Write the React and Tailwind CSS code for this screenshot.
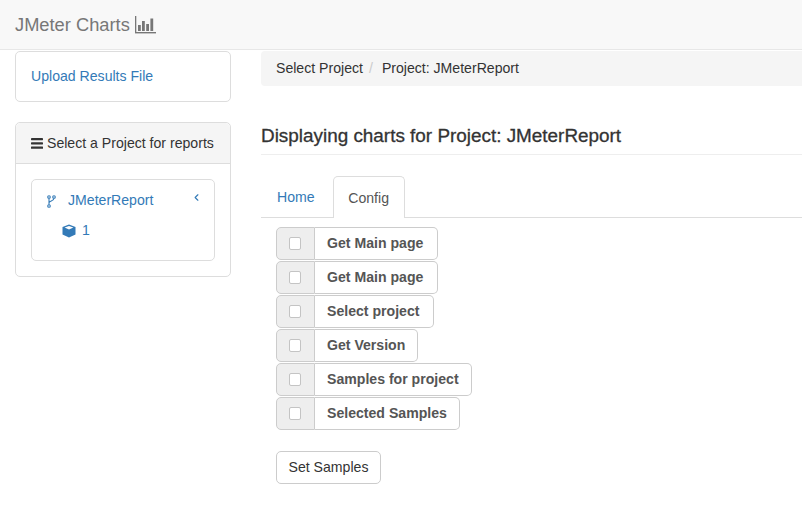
import React from 'react';
import { ChevronLeft } from 'lucide-react';

const samples = [
  { label: 'Get Main page', width: 'w-[123px]' },
  { label: 'Get Main page', width: 'w-[123px]' },
  { label: 'Select project', width: 'w-[119px]' },
  { label: 'Get Version', width: '' },
  { label: 'Samples for project', width: '' },
  { label: 'Selected Samples', width: '' },
];

const ChartIcon = () => (
  <svg width="21" height="18" viewBox="0 0 21 18" fill="#777" className="ml-[5px] mt-[1px]">
    <rect x="0" y="0" width="1.3" height="17" />
    <rect x="0" y="16" width="21" height="1.4" />
    <rect x="3" y="9" width="2.8" height="6" />
    <rect x="7" y="5" width="2.8" height="10" />
    <rect x="11.2" y="8" width="2.8" height="7" />
    <rect x="15.4" y="2.5" width="2.8" height="12.5" />
  </svg>
);

const BarsIcon = () => (
  <svg width="12" height="11" viewBox="0 0 12 11" fill="#333" className="mr-[4px]">
    <rect x="0" y="0" width="12" height="2.2" rx="0.4" />
    <rect x="0" y="4.3" width="12" height="2.2" rx="0.4" />
    <rect x="0" y="8.6" width="12" height="2.2" rx="0.4" />
  </svg>
);

const ForkIcon = () => (
  <svg width="9" height="13" viewBox="0 0 9 13" fill="none" stroke="#337ab7" strokeWidth="1.1" className="mr-[12px] mt-[1px]">
    <circle cx="2" cy="2" r="1.3" />
    <circle cx="7" cy="2" r="1.3" />
    <circle cx="2" cy="11" r="1.3" />
    <path d="M2 3.3V9.7M7 3.3C7 6.5 2 5.5 2 8" />
  </svg>
);

const CubeIcon = () => (
  <svg width="14" height="14" viewBox="0 0 14 14" className="mr-[6px]">
    <path d="M7 0.5L13.5 3V10.6L7 13.5L0.5 10.6V3Z" fill="#337ab7" />
    <path d="M7 1.9L11.4 3.6L7 5.4L2.6 3.6Z" fill="#ffffff" />
  </svg>
);

const SampleRow = ({ label, width }) => (
  <div className="flex h-[33px] mb-[1px]">
    <div className="w-[39px] shrink-0 pr-[1px] bg-[#eeeeee] border border-[#cccccc] rounded-l-[5px] flex items-center justify-center">
      <span className="w-[12px] h-[13px] bg-white border border-[#c4c4c4] rounded-[2px]" />
    </div>
    <div className={`${width} border border-l-0 border-[#cccccc] rounded-r-[5px] px-3 flex items-center font-bold text-[#555555] bg-white`}>
      {label}
    </div>
  </div>
);

export default function App() {
  return (
    <div className="h-[515px] overflow-hidden bg-white text-[14.1px] text-[#333333] font-['Liberation_Sans',Arial,sans-serif]">
      <div className="h-[50px] bg-[#f8f8f8] border-b border-[#e7e7e7] flex items-center pl-[15px] text-[18.3px] text-[#777777]">
        JMeter Charts
        <ChartIcon />
      </div>
      <div className="flex">
        <div className="w-[261px] pl-[15px] pr-[30px] shrink-0 pt-[1px]">
          <div className="h-[51px] bg-white border border-[#dddddd] rounded-[5px] flex items-center px-[15px] text-[#337ab7]">
            Upload Results File
          </div>
          <div className="mt-[20px] h-[155px] border border-[#dddddd] rounded-[5px]">
            <div className="h-[41px] pt-[1px] bg-[#f5f5f5] border-b border-[#dddddd] rounded-t-[5px] flex items-center px-[15px] whitespace-nowrap">
              <BarsIcon />
              Select a Project for reports
            </div>
            <div className="mx-[15px] mt-[15px] h-[82px] border border-[#dddddd] rounded-[5px] relative text-[#337ab7]">
              <div className="flex items-center pt-[10px] pl-[15px]">
                <ForkIcon />
                JMeterReport
              </div>
              <ChevronLeft size={11} strokeWidth={2.5} className="absolute right-[12px] top-[12px]" />
              <div className="flex items-center pl-[30px] mt-[9px]">
                <CubeIcon />
                1
              </div>
            </div>
          </div>
        </div>
        <div className="flex-1 pt-[1px]">
          <div className="h-[35px] pt-[1px] bg-[#f5f5f5] rounded-l-[4px] flex items-center pl-[15px]">
            Select Project
            <span className="text-[#cccccc] px-[6px]">/</span>
            <span className="ml-[3px]">Project: JMeterReport</span>
          </div>
          <div className="mt-[36px] h-[33px] border-b border-[#eeeeee] text-[18.9px] font-medium [-webkit-text-stroke:0.3px_#333333]">
            Displaying charts for Project: JMeterReport
          </div>
          <div className="mt-[21px] h-[42px] border-b border-[#dddddd] flex pl-[1px]">
            <div className="pl-[15px] pr-[18px] pt-[11px] text-[#337ab7]">Home</div>
            <div className="h-[42px] w-[72px] text-center pt-[11px] bg-white border border-b-0 border-[#dddddd] rounded-t-[5px] text-[#555555]">Config</div>
          </div>
          <div className="pl-[15px] pt-[9px]">
            {samples.map((s, i) => (
              <SampleRow key={i} label={s.label} width={s.width} />
            ))}
            <div className="mt-[21px] w-[105px] h-[33px] border border-[#cccccc] rounded-[5px] flex items-center justify-center">
              Set Samples
            </div>
          </div>
        </div>
      </div>
    </div>
  );
}
